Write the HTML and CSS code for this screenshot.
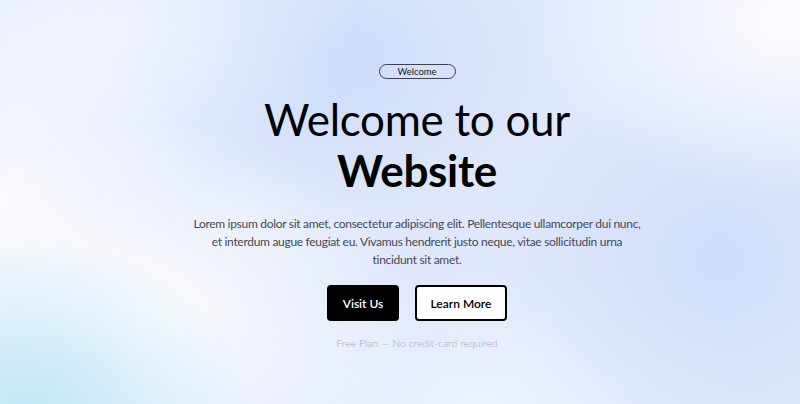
FILE: index.html
```html
<!DOCTYPE html>
<html lang="en">
<head>
<meta charset="utf-8">
<title>Welcome</title>
<link rel="stylesheet" href="styles.css">
</head>
<body>
<main class="hero">
  <span class="badge">Welcome</span>
  <h1 class="title">Welcome to our<br><strong>Website</strong></h1>
  <p class="lead">Lorem ipsum dolor sit amet, consectetur adipiscing elit. Pellentesque ullamcorper dui nunc, et interdum augue feugiat eu. Vivamus hendrerit justo neque, vitae sollicitudin urna tincidunt sit amet.</p>
  <div class="actions">
    <a class="btn btn-dark" href="#">Visit Us</a>
    <a class="btn btn-light" href="#">Learn More</a>
  </div>
  <p class="note">Free Plan — No credit-card required</p>
</main>
</body>
</html>
```
FILE: styles.css
```css
html, body {
  margin: 0;
  height: 100%;
}
body {
  font-family: Lato, "Noto Sans", sans-serif;
  color: #000;
  background-color: #dfe8fb;
  background-image:
    radial-gradient(ellipse 220px 160px at 30px 400px, rgba(190, 230, 245, 0.9), rgba(190, 230, 245, 0) 100%),
    radial-gradient(ellipse 260px 200px at 150px 320px, rgba(255, 255, 255, 0.95), rgba(255, 255, 255, 0) 100%),
    radial-gradient(ellipse 200px 220px at 0px 200px, rgba(255, 255, 255, 0.8), rgba(255, 255, 255, 0) 100%),
    radial-gradient(ellipse 260px 180px at 790px 20px, rgba(255, 255, 255, 0.9), rgba(255, 255, 255, 0) 100%),
    radial-gradient(ellipse 260px 160px at 100px 30px, rgba(245, 248, 255, 0.8), rgba(245, 248, 255, 0) 100%),
    radial-gradient(ellipse 220px 160px at 330px 60px, rgba(200, 218, 250, 0.9), rgba(200, 218, 250, 0) 100%),
    radial-gradient(ellipse 220px 200px at 720px 260px, rgba(205, 220, 250, 0.9), rgba(205, 220, 250, 0) 100%),
    radial-gradient(ellipse 260px 140px at 480px 404px, rgba(240, 245, 255, 0.8), rgba(240, 245, 255, 0) 100%);
}
.hero {
  display: flex;
  flex-direction: column;
  align-items: center;
  text-align: center;
  padding: 64px 0 0 34px;
}
.badge {
  display: inline-block;
  box-sizing: border-box;
  width: 77px;
  height: 15px;
  line-height: 13px;
  border: 1px solid #3a4150;
  border-radius: 8px;
  font-size: 9.5px;
  color: #1a1d24;
}
.title {
  margin: 15px 0 0;
  font-size: 44px;
  line-height: 51px;
  font-weight: 400;
  letter-spacing: -0.3px;
}
.title strong {
  font-weight: 700;
}
.lead {
  margin: 19px 0 0;
  width: 452px;
  font-size: 12px;
  font-weight: 400;
  letter-spacing: -0.3px;
  line-height: 18px;
  color: #454953;
}
.actions {
  display: flex;
  gap: 16px;
  margin-top: 16px;
}
.btn {
  display: flex;
  align-items: center;
  justify-content: center;
  box-sizing: border-box;
  height: 36px;
  border-radius: 4px;
  font-size: 12px;
  font-weight: 600;
  text-decoration: none;
}
.btn-dark {
  width: 72px;
  background: #000;
  color: #fff;
}
.btn-light {
  width: 92px;
  background: #fff;
  color: #000;
  border: 2px solid #000;
}
.note {
  margin: 16px 0 0;
  font-size: 10.5px;
  font-weight: 300;
  color: #a2a7b2;
}
```
